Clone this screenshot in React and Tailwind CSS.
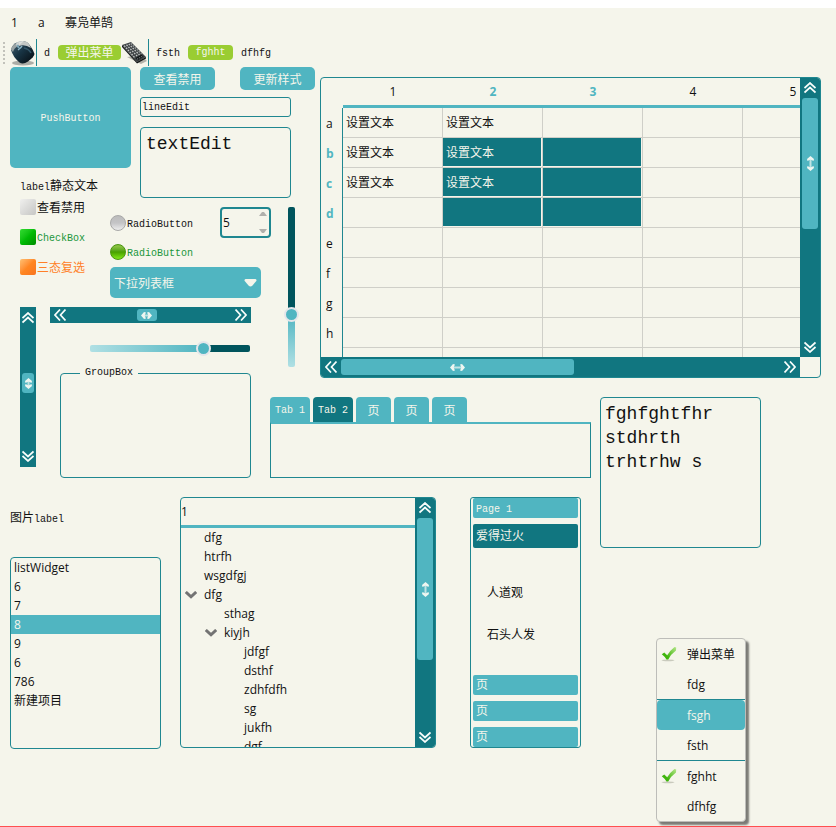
import React from "react";

const DOUBLE_CHEVRON = {
  up: "M0.5 6 L6 1 L11.5 6 M0.5 10.5 L6 5.5 L11.5 10.5",
  down: "M0.5 1.5 L6 6.5 L11.5 1.5 M0.5 6 L6 11 L11.5 6",
  left: "M6 0.5 L1 6 L6 11.5 M11.5 0.5 L6.5 6 L11.5 11.5",
  right: "M0.5 0.5 L5.5 6 L0.5 11.5 M6 0.5 L11 6 L6 11.5",
};

function DoubleChevron({ dir }) {
  return (
    <svg width="12" height="12" viewBox="0 0 12 12" fill="none" stroke="#f8fdfb" strokeWidth="1.7" aria-hidden="true">
      <path d={DOUBLE_CHEVRON[dir]} />
    </svg>
  );
}

function Grip({ vertical, small }) {
  const len = small ? 11 : 15;
  const shaft = `M3 2.5 H${len - 3} V4.5 H3Z`;
  const heads = `M0 3.5 L3 0 L5 0.5 L3.6 3.5 L5 6.5 L3 7Z M${len} 3.5 L${len - 3} 0 L${len - 5} 0.5 L${len - 3.6} 3.5 L${len - 5} 6.5 L${len - 3} 7Z`;
  return vertical ? (
    <svg width="7" height={len} viewBox={`0 0 7 ${len}`} fill="#eef6f1" aria-hidden="true">
      <g transform="matrix(0 1 1 0 0 0)">
        <path d={shaft} opacity="0.7" />
        <path d={heads} />
      </g>
    </svg>
  ) : (
    <svg width={len} height="7" viewBox={`0 0 ${len} 7`} fill="#eef6f1" aria-hidden="true">
      <path d={shaft} opacity="0.7" />
      <path d={heads} />
    </svg>
  );
}

function Mono({ children }) {
  return <span className="font-['Liberation_Mono',monospace] text-[10px]">{children}</span>;
}

function MouseIcon() {
  return (
    <svg width="26" height="26" viewBox="0 0 26 26" aria-hidden="true">
      <defs>
        <linearGradient id="mouseBody" x1="0" y1="0" x2="1" y2="1">
          <stop offset="0" stopColor="#4b6878" />
          <stop offset="0.45" stopColor="#183444" />
          <stop offset="1" stopColor="#05090d" />
        </linearGradient>
      </defs>
      <ellipse cx="13" cy="23" rx="11" ry="2.500" fill="#8d8f8a" opacity="0.7" />
      <path d="M1 10 Q2 4 8 2 Q15 0 18 3 Q23 9 24.500 14 Q24 17 18 21.500 Q13 25 9.500 22.500 Q3 17 1 10Z" fill="url(#mouseBody)" />
      <path d="M1 9.500 Q2 4 9 2 L8 6 Q4 8 3 12Z" fill="#9aa3a4" />
      <path d="M9 1.800 Q16 0 18.500 3.500 Q20 6 21 8 Q15 4 9 6Z" fill="#c3c7c5" />
      <path d="M6.500 2.500 Q10 0.500 14 1 L9 5.500 L6 6Z" fill="#e2e5e2" opacity="0.8" />
      <path d="M8 10 Q11 8 12 6" stroke="#8bb4c6" strokeWidth="1.500" fill="none" />
      <path d="M7 5 L9 8" stroke="#7ba6b8" strokeWidth="2" />
      <path d="M14 8 Q19 9 21 13" stroke="#3b6074" strokeWidth="1.600" fill="none" opacity="0.8" />
    </svg>
  );
}

function KeyboardIcon() {
  return (
    <svg width="26" height="26" viewBox="0 0 26 26" aria-hidden="true">
      <path d="M6 17 L20 24 L26 21 L20 15Z" fill="#85867f" opacity="0.6" />
      <path d="M1 5 L10 2 L25 17 L16 22Z" fill="#3f4446" />
      <path d="M1 5 L16 22 L16 23.500 L1 7Z" fill="#16191b" />
      <path d="M16 22 L25 17 V18.500 L16 23.500Z" fill="#101415" />
      <path d="M3.200 5.600 L14 18 M5.500 4.800 L16.500 16.500 M7.800 4 L18.500 15" stroke="#c4c7c6" strokeWidth="1.300" strokeDasharray="1.600 1.200" />
      <path d="M9.800 3.400 L20.500 14" stroke="#a0a5a5" strokeWidth="1.200" strokeDasharray="1.600 1.200" />
      <path d="M14.500 18 L20.500 14.500 L22.500 16.500 L16.500 20.500Z" fill="#14181a" />
      <path d="M16 19.200 L22 15.800" stroke="#7d8283" strokeDasharray="1.200 1" />
    </svg>
  );
}

function CheckIcon() {
  return (
    <svg width="16" height="16" viewBox="0 0 16 16" aria-hidden="true">
      <defs>
        <linearGradient id="tick" x1="0" y1="1" x2="1" y2="0">
          <stop offset="0.300" stopColor="#3fb50c" />
          <stop offset="1" stopColor="#b5e68a" />
        </linearGradient>
      </defs>
      <ellipse cx="7" cy="14.300" rx="6.500" ry="0.900" fill="#c9cabd" />
      <path d="M0.800 8.200 L3.300 6.500 L6.200 9.300 Q9 4.500 13.500 1 L15.200 1.500 L15 4.500 Q10 8 7.200 13.500 H5.500 Q3.800 10.500 0.800 8.200Z" fill="url(#tick)" />
    </svg>
  );
}

function ScrollBar({ vertical, label, thick, className, handleClass, children }) {
  const dirBox = vertical ? "flex-col" : "flex-row";
  const endBox = vertical ? (thick ? "h-5 w-full" : "h-[22px] w-full") : "w-5 h-full";
  return (
    <div role="group" aria-label={label} className={`flex shrink-0 bg-[#117680] ${dirBox} ${className}`}>
      <button type="button" aria-label={vertical ? "Scroll up" : "Scroll left"} className={`flex shrink-0 items-center justify-center ${endBox}`}>
        <DoubleChevron dir={vertical ? "up" : "left"} />
      </button>
      <div className={`flex flex-1 ${dirBox} ${children ? "items-center justify-center" : ""}`}>
        {children || (
          <div className={`flex items-center justify-center rounded-[3px] bg-[#50b5c1] ${handleClass}`}>
            <Grip vertical={vertical} />
          </div>
        )}
      </div>
      <button type="button" aria-label={vertical ? "Scroll down" : "Scroll right"} className={`flex shrink-0 items-center justify-center ${endBox}`}>
        <DoubleChevron dir={vertical ? "down" : "right"} />
      </button>
    </div>
  );
}

function MenuBar() {
  return (
    <nav className="flex h-[30px] items-center pl-[11px]">
      <button type="button" className="w-[27px] text-left">1</button>
      <button type="button" className="w-[27px] text-left">a</button>
      <button type="button">寡凫单鹄</button>
    </nav>
  );
}

function ToolBar() {
  return (
    <div role="toolbar" className="flex h-[29px] items-center">
      <div className="mr-[5px] ml-[3px] flex flex-col gap-[2px]">
        {[0, 1, 2, 3, 4, 5].map((i) => (
          <i key={i} className="size-[2px] bg-[#c2c2bb]" />
        ))}
      </div>
      <button type="button" aria-label="Mouse" className="w-[26px]"><MouseIcon /></button>
      <div className="mr-[7px] h-[27px] w-px bg-[#1f8790]" />
      <button type="button" className="mr-2"><Mono>d</Mono></button>
      <button type="button" className="h-[15px] w-[63px] rounded-[4px] bg-[#9acd32] leading-4 text-[#f5f5eb]">弹出菜单</button>
      <button type="button" aria-label="Keyboard" className="w-[27px]"><KeyboardIcon /></button>
      <div className="mr-[7px] h-[27px] w-px bg-[#1f8790]" />
      <button type="button" className="mr-2"><Mono>fsth</Mono></button>
      <button type="button" className="mr-2 flex h-[15px] w-[45px] items-center justify-center rounded-[4px] bg-[#9acd32] text-[#f5f5eb]"><Mono>fghht</Mono></button>
      <button type="button"><Mono>dfhfg</Mono></button>
    </div>
  );
}

function TopInputs() {
  return (
    <section className="col-span-2 col-start-1 row-start-1 flex gap-[9px]">
      <div className="w-[121px]">
        <button type="button" className="mb-[10px] flex h-[101px] w-full items-center justify-center rounded-[5px] bg-[#50b5c1] pt-[2px] text-[#f5f5eb]">
          <Mono>PushButton</Mono>
        </button>
        <p className="pl-[10px] leading-4"><Mono>label</Mono>静态文本</p>
      </div>
      <div className="w-[175px]">
        <div className="mb-[7px] flex justify-between">
          <button type="button" className="h-[23px] w-[75px] rounded-[5px] bg-[#50b5c1] pt-[2px] text-[#f5f5eb]">查看禁用</button>
          <button type="button" className="h-[23px] w-[75px] rounded-[5px] bg-[#50b5c1] pt-[2px] text-[#f5f5eb]">更新样式</button>
        </div>
        <input
          type="text"
          aria-label="Line edit"
          defaultValue="lineEdit"
          className="mb-[10px] block h-5 w-[151px] rounded-[3px] border border-[#1f8790] px-px font-['Liberation_Mono',monospace] text-[10px]"
        />
        <textarea
          aria-label="Text edit"
          defaultValue="textEdit"
          className="block h-[71px] w-[151px] resize-none overflow-hidden rounded-[4px] border border-[#1f8790] px-[5px] pt-1 font-['Liberation_Mono',monospace] text-[18px] leading-6"
        />
      </div>
    </section>
  );
}

function Choices() {
  return (
    <div className="flex h-[100px] pl-[10px]">
      <div className="flex w-[90px] flex-col gap-[14px] pt-[1px]">
        <label className="flex h-4 items-center gap-px">
          <input type="checkbox" className="size-4 appearance-none rounded-[2px] bg-linear-to-br from-[#f0f0ee] to-[#c6c6c4]" />
          <span className="pt-[2px]">查看禁用</span>
        </label>
        <label className="flex h-4 items-center gap-px text-[#20963a]">
          <input type="checkbox" defaultChecked className="size-4 appearance-none rounded-[2px] bg-linear-to-br from-[#30dc30] via-[#00bb04] to-[#008c00]" />
          <span className="pt-[2px]"><Mono>CheckBox</Mono></span>
        </label>
        <label className="flex h-4 items-center gap-px text-[#ff7f27]">
          <input type="checkbox" className="size-4 appearance-none rounded-[2px] bg-linear-to-br from-[#ffc070] via-[#ff8620] to-[#f87420]" />
          <span className="pt-[2px]">三态复选</span>
        </label>
      </div>
      <div className="w-[151px] pt-[9px]">
        <div className="mb-[7px] flex justify-between">
          <div className="flex flex-col gap-[13px] pt-2">
            <label className="flex h-4 items-center gap-px">
              <input type="radio" name="choice" className="size-4 appearance-none rounded-full border border-[#a8a8a8] bg-linear-to-b from-[#bcbcbc] via-[#c4c4c6] to-[#ededed]" />
              <span className="pt-[2px]"><Mono>RadioButton</Mono></span>
            </label>
            <label className="flex h-4 items-center gap-px text-[#20963a]">
              <input type="radio" name="choice" defaultChecked className="size-4 appearance-none rounded-full border border-[#4a9410] bg-linear-to-b from-[#88c040] from-10% via-[#48a000] via-50% to-[#80e818]" />
              <span className="pt-[2px]"><Mono>RadioButton</Mono></span>
            </label>
          </div>
          <div className="-mr-[10px] flex h-[31px] w-[51px] rounded-[4px] border-2 border-[#1f8790]">
            <input type="text" role="spinbutton" aria-label="Amount" aria-valuenow={5} defaultValue="5" className="w-0 flex-1 pl-px" />
            <div className="flex w-[10px] flex-col justify-between py-[3px]">
              <button type="button" aria-label="Increase">
                <svg width="8" height="4" viewBox="0 0 8 4" className="block"><path d="M0 4 L3 0 H5 L8 4Z" fill="#b0b0ac" /></svg>
              </button>
              <button type="button" aria-label="Decrease">
                <svg width="8" height="4" viewBox="0 0 8 4" className="block"><path d="M0 0 L3 4 H5 L8 0Z" fill="#b0b0ac" /></svg>
              </button>
            </div>
          </div>
        </div>
        <div className="relative">
          <select aria-label="Drop-down list" className="block h-[31px] w-[151px] appearance-none rounded-[5px] bg-[#50b5c1] pt-[2px] pl-1 text-[#f5f5eb]">
            <option>下拉列表框</option>
          </select>
          <svg width="13" height="8" viewBox="0 0 13 8" className="pointer-events-none absolute top-3 right-1" aria-hidden="true">
            <path d="M1.500 0 H11.500 Q13 0.500 12.300 2 L8.500 6.500 Q6.500 8.500 4.500 6.500 L0.700 2 Q0 0.500 1.500 0Z" fill="#f5f5eb" />
          </svg>
        </div>
      </div>
    </div>
  );
}

function LeftControls() {
  return (
    <section className="col-start-1 row-span-2 row-start-2">
      <div className="h-[109px]">
        <Choices />
      </div>
      <div className="flex pl-[10px]">
        <ScrollBar vertical label="Vertical scroll bar" className="h-40 w-4">
          <div className="mb-2 flex h-5 w-3 items-center justify-center rounded-[3px] bg-[#50b5c1]"><Grip vertical small /></div>
        </ScrollBar>
        <div className="ml-[14px] w-[201px]">
          <ScrollBar label="Horizontal scroll bar" className="mb-[22px] h-4 w-full">
            <div className="mr-[8px] flex h-3 w-5 items-center justify-center rounded-[3px] bg-[#50b5c1]"><Grip small /></div>
          </ScrollBar>
          <input
            type="range"
            aria-label="Horizontal slider"
            defaultValue={73}
            className="mb-[13px] ml-10 block h-[7px] w-40 appearance-none rounded-[2px] bg-[linear-gradient(to_right,#b0e0e4_0%,#50b5c1_70%,#00545c_70%,#00545c_100%)] [&::-webkit-slider-thumb]:size-[15px] [&::-webkit-slider-thumb]:appearance-none [&::-webkit-slider-thumb]:rounded-full [&::-webkit-slider-thumb]:border-2 [&::-webkit-slider-thumb]:border-[#e4e6ea] [&::-webkit-slider-thumb]:bg-[#50b5c1]"
          />
          <fieldset className="ml-[10px] h-[113px] rounded-[4px] border border-[#1f8790] pl-[19px]">
            <legend className="flex h-4 items-center px-[5px]"><Mono>GroupBox</Mono></legend>
          </fieldset>
        </div>
      </div>
    </section>
  );
}

const COLUMNS = ["1", "2", "3", "4", "5"];
const ROWS = [
  { name: "a", cells: ["设置文本", "设置文本", "", "", ""] },
  { name: "b", cells: ["设置文本", "设置文本", "", "", ""], selected: true },
  { name: "c", cells: ["设置文本", "设置文本", "", "", ""], selected: true },
  { name: "d", cells: ["", "", "", "", ""], selected: true },
  { name: "e", cells: ["", "", "", "", ""] },
  { name: "f", cells: ["", "", "", "", ""] },
  { name: "g", cells: ["", "", "", "", ""] },
  { name: "h", cells: ["", "", "", "", ""] },
  { name: "", cells: ["", "", "", "", ""] },
];

function DataTable() {
  return (
    <section className="col-span-2 col-start-3 row-span-2 row-start-1 mt-[10px] mr-[15px] flex h-[301px] flex-col overflow-hidden rounded-[4px] border border-[#1f8790]">
      <div className="flex min-h-0 flex-1">
        <div className="min-w-0 flex-1 overflow-hidden">
          <table className="w-[522px] table-fixed border-separate border-spacing-0">
            <thead>
              <tr className="h-[30px]">
                <th className="w-[22px] p-0" />
                {COLUMNS.map((c) => (
                  <th
                    key={c}
                    scope="col"
                    className={`w-[100px] border-b-3 border-[#50b5c1] p-0 ${c === "2" || c === "3" ? "font-bold text-[#50b5c1]" : "font-normal"}`}
                  >
                    {c}
                  </th>
                ))}
              </tr>
            </thead>
            <tbody>
              {ROWS.map((row, r) => (
                <tr key={r} className="h-[30px]">
                  <th
                    scope="row"
                    className={`border-r border-[#1f8790] pt-[2px] pr-0 pb-0 pl-[5px] text-left ${row.selected ? "font-bold text-[#50b5c1]" : "font-normal"}`}
                  >
                    {row.name}
                  </th>
                  {row.cells.map((cell, i) => {
                    const on = row.selected && (i === 1 || i === 2);
                    return (
                      <td key={i} className="border-r border-b border-[#cfcfc8] p-0">
                        <div
                          className={`flex h-[29px] items-center border-r border-b border-[#f5f5eb] pt-[2px] pl-[3px] ${on ? "bg-[#117680] text-[#f5f5eb]" : ""}`}
                        >
                          {cell}
                        </div>
                      </td>
                    );
                  })}
                </tr>
              ))}
            </tbody>
          </table>
        </div>
        <ScrollBar vertical thick label="Table vertical scroll bar" className="w-5" handleClass="mx-[2px] h-[131px]" />
      </div>
      <div className="flex h-5">
        <ScrollBar thick label="Table horizontal scroll bar" className="h-5 w-0 flex-1" handleClass="my-[2px] w-[233px]" />
        <div className="w-5" />
      </div>
    </section>
  );
}

function Tabs() {
  const base = "flex h-[25px] items-center justify-center rounded-t-[4px] pt-[2px] text-[#f5f5eb]";
  return (
    <section className="col-span-2 col-start-2 row-start-3 mr-[9px] flex h-[81px] flex-col">
      <div role="tablist" className="flex gap-[3px]">
        <button type="button" role="tab" aria-selected="false" className={`${base} w-10 bg-[#50b5c1]`}><Mono>Tab 1</Mono></button>
        <button type="button" role="tab" aria-selected="true" className={`${base} w-10 bg-[#117680]`}><Mono>Tab 2</Mono></button>
        {[0, 1, 2].map((i) => (
          <button key={i} type="button" role="tab" aria-selected="false" className={`${base} w-[35px] bg-[#50b5c1]`}>页</button>
        ))}
      </div>
      <div role="tabpanel" className="flex-1 border border-t-2 border-[#1f8790] border-t-[#50b5c1]" />
    </section>
  );
}

const LIST_ITEMS = ["listWidget", "6", "7", "8", "9", "6", "786", "新建项目"];

function ListPanel() {
  return (
    <div className="w-[151px]">
      <p className="mt-[13px] mb-[31px] h-4 leading-4">图片<Mono>label</Mono></p>
      <ul role="listbox" aria-label="List" className="h-[192px] rounded-[4px] border border-[#1f8790]">
        {LIST_ITEMS.map((item, i) => (
          <li key={i} role="option" aria-selected={i === 3} className={`h-[19px] pl-[3px] leading-[19px] ${i === 3 ? "bg-[#50b5c1] text-[#f5f5eb]" : ""}`}>
            {item}
          </li>
        ))}
      </ul>
    </div>
  );
}

const TREE_ITEMS = [
  ["dfg", 0],
  ["htrfh", 0],
  ["wsgdfgj", 0],
  ["dfg", 0, true],
  ["sthag", 1],
  ["kiyjh", 1, true],
  ["jdfgf", 2],
  ["dsthf", 2],
  ["zdhfdfh", 2],
  ["sg", 2],
  ["jukfh", 2],
  ["dgf", 2],
];
const INDENTS = ["pl-1", "pl-6", "pl-11"];

function TreePanel() {
  return (
    <div className="flex h-[251px] w-64 overflow-hidden rounded-[4px] border border-[#1f8790]">
      <div className="flex-1 overflow-hidden">
        <div className="h-[30px] border-b-3 border-[#50b5c1] leading-[27px]">1</div>
        <ul role="tree" aria-label="Tree">
          {TREE_ITEMS.map(([name, depth, open], i) => (
            <li key={i} role="treeitem" aria-expanded={open} className={`flex h-[19px] items-center ${INDENTS[depth]}`}>
              <span className="w-[19px]">
                {open && (
                  <svg width="12" height="8" viewBox="0 0 12 8" fill="none" stroke="#737373" strokeWidth="3" aria-hidden="true">
                    <path d="M0.800 1 L6 5.800 L11.200 1" />
                  </svg>
                )}
              </span>
              {name}
            </li>
          ))}
        </ul>
      </div>
      <ScrollBar vertical thick label="Tree scroll bar" className="w-5" handleClass="mx-[2px] h-[142px]" />
    </div>
  );
}

function ToolBox() {
  const page = "h-5 w-full rounded-[2px] bg-[#50b5c1] px-[3px] text-left leading-5 text-[#f5f5eb]";
  return (
    <div className="flex h-[251px] w-[111px] flex-col gap-[6px] rounded-[3px] border border-[#1f8790] px-[2px]">
      <button type="button" className={page}><Mono>Page 1</Mono></button>
      <button type="button" className="h-6 w-full rounded-[2px] bg-[#117680] px-[3px] text-left text-[#f5f5eb]">爱得过火</button>
      <div className="flex flex-1 flex-col gap-6 pt-[30px] pl-[14px]">
        <p>人道观</p>
        <p>石头人发</p>
      </div>
      <button type="button" className={page}>页</button>
      <button type="button" className={page}>页</button>
      <button type="button" className={page}>页</button>
    </div>
  );
}

const MENU = [
  { text: "弹出菜单", checked: true },
  { text: "fdg", divider: true },
  { text: "fsgh", active: true },
  { text: "fsth", divider: true },
  { text: "fghht", checked: true },
  { text: "dfhfg" },
];

function PopupMenu() {
  return (
    <ul role="menu" className="mt-[90px] ml-14 w-[90px] rounded-[4px] border border-[#bdbdb9] bg-[#f5f5eb] shadow-[3px_3px_2px_rgba(0,0,0,0.5)]">
      {MENU.map((m) => (
        <li key={m.text} role="none" className={m.divider ? "border-b border-[#1f8790]" : ""}>
          <button
            type="button"
            role="menuitem"
            className={`flex h-[30px] w-full items-center rounded-[4px] pl-1 ${m.active ? "bg-[#50b5c1] text-[#f5f5eb]" : ""}`}
          >
            <span className="w-[26px]">{m.checked && <CheckIcon />}</span>
            <span className="pt-[2px]">{m.text}</span>
          </button>
        </li>
      ))}
    </ul>
  );
}

export default function App() {
  return (
    <div className="flex min-h-screen flex-col bg-white pt-2">
      <div className="flex flex-1 flex-col border-b border-[#ff5050] bg-[#f5f5eb] font-['Open_Sans','Noto_Sans_CJK_SC',sans-serif] text-[12px] leading-[18px] text-[#111111]">
        <MenuBar />
        <ToolBar />
        <main className="grid flex-1 grid-cols-[260px_50px_280px_1fr] grid-rows-[131px_199px_100px_auto] pl-[10px]">
          <TopInputs />
          <LeftControls />
          <div className="col-start-2 row-start-2 pt-[9px] pl-[18px]">
            <input
              type="range"
              aria-label="Vertical slider"
              defaultValue={31}
              className="block h-40 w-[7px] appearance-none rounded-[2px] bg-[linear-gradient(to_bottom,#00545c_0%,#00545c_67%,#50b5c1_67%,#b0e0e4_100%)] [direction:rtl] [writing-mode:vertical-lr] [&::-webkit-slider-thumb]:size-[15px] [&::-webkit-slider-thumb]:appearance-none [&::-webkit-slider-thumb]:rounded-full [&::-webkit-slider-thumb]:border-2 [&::-webkit-slider-thumb]:border-[#e4e6ea] [&::-webkit-slider-thumb]:bg-[#50b5c1]"
            />
          </div>
          <DataTable />
          <Tabs />
          <section className="col-span-3 col-start-1 row-start-4 flex items-start">
            <ListPanel />
            <div className="ml-[19px]"><TreePanel /></div>
            <div className="ml-[34px]"><ToolBox /></div>
          </section>
          <section className="col-start-4 row-span-2 row-start-3">
            <textarea
              aria-label="Notes"
              defaultValue={"fghfghtfhr\nstdhrth\ntrhtrhw s"}
              className="block h-[151px] w-[161px] resize-none overflow-hidden rounded-[4px] border border-[#1f8790] px-1 pt-1 font-['Liberation_Mono',monospace] text-[18px] leading-6"
            />
            <PopupMenu />
          </section>
        </main>
      </div>
    </div>
  );
}
